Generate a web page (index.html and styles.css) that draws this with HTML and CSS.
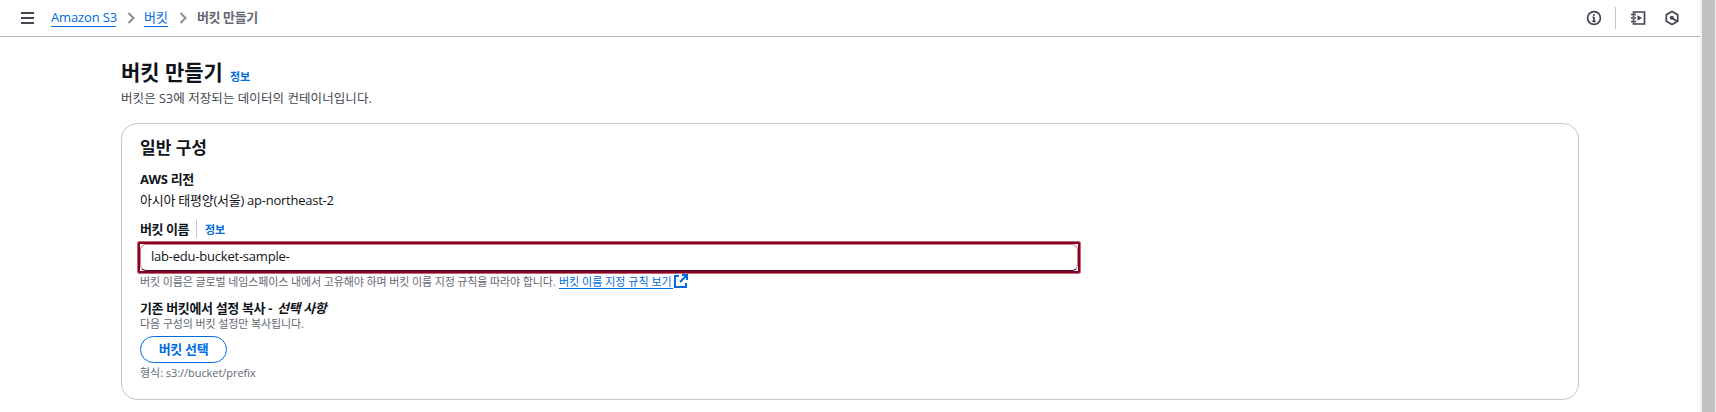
FILE: index.html
```html
<!DOCTYPE html>
<html lang="ko">
<head>
<meta charset="utf-8">
<title>버킷 만들기</title>
<link rel="stylesheet" href="styles.css">
</head>
<body>
<div class="page">
  <div class="main">
    <header class="topbar">
      <svg class="menu" width="13" height="12" viewBox="0 0 13 12"><path d="M0 1h13M0 6h13M0 11h13"/></svg>
      <nav class="crumbs">
        <a class="link crumb-s3">Amazon S3</a>
        <svg class="chevron" width="8" height="12" viewBox="0 0 8 12"><path d="M1.500 1l5 5-5 5"/></svg>
        <a class="link crumb-bucket">버킷</a>
        <svg class="chevron" width="8" height="12" viewBox="0 0 8 12"><path d="M1.500 1l5 5-5 5"/></svg>
        <span class="current">버킷 만들기</span>
      </nav>
      <div class="tools">
        <svg width="16" height="16" viewBox="0 0 16 16"><circle cx="8" cy="8" r="6.400"/><path d="M8 7v4.500M6.500 7.400H8M6.300 11.300h3.400M8 4v1.700"/></svg>
        <span class="tool-divider"></span>
        <svg width="16" height="16" viewBox="0 0 16 16"><path d="M3.500 3.500V2h11v12h-11v-1.500M3.500 5.500v1.500M3.500 9v1.500M1 4.500h5M1 8h5M1 11.500h5"/><path class="solid" d="M7.500 5.200l4.500 2.800-4.500 2.800z"/></svg>
        <svg class="hexagon" width="16" height="16" viewBox="0 0 16 16"><path d="M8 1.500l5.700 3.200v6.600L8 14.500l-5.700-3.200V4.700zM8 8l4.500 3"/><circle class="solid" cx="7.800" cy="7.800" r="2"/></svg>
      </div>
    </header>
    <main class="content">
      <div class="heading"><h1>버킷 만들기</h1><a class="info">정보</a></div>
      <p class="description">버킷은 S3에 저장되는 데이터의 컨테이너입니다.</p>
      <section class="card">
        <h2>일반 구성</h2>
        <div class="label region-label">AWS 리전</div>
        <div class="region">아시아 태평양(서울) ap-northeast-2</div>
        <div class="name-row"><span class="label name-label">버킷 이름</span><span class="label-divider"></span><a class="info">정보</a></div>
        <div class="highlight"><input class="field" value="lab-edu-bucket-sample-"></div>
        <div class="hint name-hint"><span class="rule-text">버킷 이름은 글로벌 네임스페이스 내에서 고유해야 하며 버킷 이름 지정 규칙을 따라야 합니다.</span><a class="link rule-link">버킷 이름 지정 규칙 보기</a><svg class="external" width="14" height="14" viewBox="0 0 14 14"><path d="M5 2H1v11h11V9M8 1h5v5M13 1L6 8"/></svg></div>
        <div class="label copy-label"><span class="copy-text">기존 버킷에서 설정 복사 -</span><i>선택 사항</i></div>
        <div class="hint copy-hint">다음 구성의 버킷 설정만 복사됩니다.</div>
        <button class="choose">버킷 선택</button>
        <div class="hint format">형식: s3://bucket/prefix</div>
      </section>
    </main>
  </div>
  <div class="scrollbar"></div>
</div>
</body>
</html>
```
FILE: styles.css
```css
* { box-sizing: border-box; }
body { margin: 0; background: #fff; color: #0f141a; font: 13px/20px "Open Sans", "Noto Sans CJK KR", sans-serif; overflow: hidden; }
h1, h2, p { margin: 0; }
svg { display: block; flex: none; fill: none; stroke: #424650; stroke-width: 2; }
.page { display: flex; height: 412px; }
.main { flex: 1; }
.scrollbar { width: 16px; background: #c1c1c1; border-left: 2px solid #f1f1f1; border-right: 1px solid #f1f1f1; }
.topbar { display: flex; align-items: center; height: 37px; padding: 0 20px 0 21px; border-bottom: 1px solid #b4b4bb; }
.crumbs { display: flex; align-items: center; margin-left: 17px; white-space: nowrap; }
.link { color: #006ce0; border-bottom: 1px solid #006ce0; line-height: 16px; }
.crumb-s3 { width: 65px; height: 17px; line-height: 15px; letter-spacing: -0.15px; }
.crumb-bucket { width: 24px; height: 17px; line-height: 15px; }
.chevron { margin: 0 9px 0 11px; stroke: #8c8c94; }
.current { color: #656871; font-weight: 700; margin: -2px 0 0 1px; letter-spacing: -0.4px; }
.tools { display: flex; align-items: center; margin-left: auto; }
.tools svg { stroke-width: 1.7; }
.solid { fill: #424650; stroke: none; }
.tool-divider { width: 1px; height: 22px; margin: 0 14px 0 13px; background: #c6c6cd; }
.hexagon { margin-left: 18px; }
.content { padding: 20px 0 0 121px; white-space: nowrap; }
.heading { display: flex; align-items: baseline; height: 31px; }
h1 { width: 102px; font-size: 21px; line-height: 30px; letter-spacing: -0.05px; }
.info { color: #006ce0; font-size: 11px; font-weight: 700; letter-spacing: -0.2px; }
.heading .info { margin-left: 7px; position: relative; top: 1px; }
.description { height: 20px; color: #424650; font-size: 12.5px; line-height: 22px; letter-spacing: 0.08px; }
.card { display: flex; flex-direction: column; align-items: flex-start; width: 1458px; height: 277px; margin-top: 15px; padding: 11px 17px; border: 1px solid #c6c6cd; border-radius: 16px; }
h2 { height: 24px; margin-left: 1px; font-size: 17px; line-height: 25px; }
.label { font-weight: 700; letter-spacing: -0.35px; }
.region-label, .region, .name-row, .copy-label, .hint, .choose { margin-left: 1px; }
.region-label { height: 20px; margin-top: 10px; }
.region { height: 20px; margin-top: 1px; letter-spacing: -0.25px; }
.name-row { display: flex; align-items: center; height: 20px; margin-top: 9px; }
.name-row .info { line-height: 22px; margin-top: 2px; }
.name-label { width: 49px; letter-spacing: -0.45px; }
.label-divider { width: 1px; height: 18px; margin: 0 8px 0 7px; background: #c6c6cd; }
.highlight { width: 944px; height: 33px; margin: 2px 0 0 -2px; padding: 2px; border: 1px solid #c0667a; border-radius: 2px; background: #fff; box-shadow: inset 0 0 0 2px #8b0020; }
.field { display: block; width: 100%; height: 27px; padding: 0 10px 4px; border: 1px solid #c87f8f; border-bottom-color: #35103c; border-radius: 6px; outline: 0; background: #fff; color: #0f141a; font: inherit; letter-spacing: -0.22px; }
.hint { height: 16px; color: #656871; font-size: 11px; line-height: 16px; letter-spacing: -0.12px; }
.rule-text { width: 419px; }
.name-hint { display: flex; line-height: 15px; }
.rule-link { width: 114px; height: 15px; line-height: 15px; letter-spacing: 0; }
.external { margin-left: 1px; stroke: #006ce0; }
.copy-label { display: flex; height: 20px; margin-top: 8px; }
.copy-text { width: 137px; }
.copy-hint { margin-top: -2px; }
.choose { width: 87px; height: 27px; margin-top: 4px; padding: 0 0 1px; border: 1.5px solid #006ce0; border-radius: 14px; background: #fff; color: #006ce0; font: 700 13px/20px "Open Sans", "Noto Sans CJK KR", sans-serif; letter-spacing: -0.3px; }
.format { margin-top: 2px; letter-spacing: -0.05px; }
```
